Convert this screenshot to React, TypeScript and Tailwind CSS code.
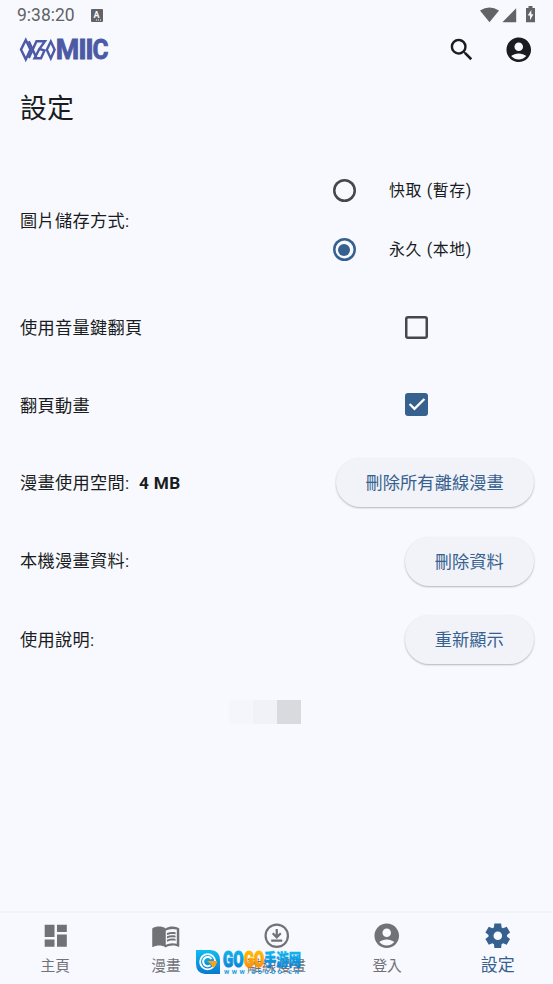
import type { ReactNode } from "react";
import { MdDashboard, MdMenuBook, MdSearch } from "react-icons/md";

function AccountIcon() {
  return (
    <svg viewBox="0 0 24 24" fill="currentColor" className="size-[29.5px]">
      <path d="M12 2C6.48 2 2 6.48 2 12s4.48 10 10 10 10-4.48 10-10S17.52 2 12 2zm0 4c1.93 0 3.5 1.57 3.5 3.5S13.93 13 12 13s-3.5-1.57-3.5-3.5S10.07 6 12 6zm0 14c-2.03 0-4.43-.82-6.14-2.88C7.55 15.8 9.68 15 12 15s4.45.8 6.14 2.12C16.43 19.18 14.03 20 12 20z" />
    </svg>
  );
}

function GearIcon() {
  return (
    <svg viewBox="0 0 24 24" fill="currentColor" className="size-[29.5px]">
      <path d="m9.25 22-.4-3.2q-.325-.125-.612-.3-.288-.175-.563-.375L4.7 19.375l-2.75-4.75 2.575-1.95Q4.5 12.5 4.5 12.337v-.675q0-.162.025-.337L1.95 9.375l2.75-4.75 2.975 1.25q.275-.2.575-.375.3-.175.6-.3l.4-3.2h5.5l.4 3.2q.325.125.613.3.287.175.562.375l2.975-1.25 2.75 4.75-2.575 1.95q.025.175.025.337v.675q0 .163-.05.338l2.575 1.95-2.75 4.75-2.95-1.25q-.275.2-.575.375-.3.175-.6.3l-.4 3.2Zm2.8-6.5q1.45 0 2.475-1.025Q15.55 13.45 15.55 12q0-1.45-1.025-2.475Q13.5 8.5 12.05 8.5q-1.475 0-2.488 1.025Q8.55 10.55 8.55 12q0 1.45 1.012 2.475Q10.575 15.5 12.05 15.5Z" />
    </svg>
  );
}

function OfflineIcon() {
  return (
    <svg viewBox="0 0 24 24" fill="none" stroke="currentColor" strokeWidth="1.8" className="size-[29.5px]">
      <circle cx="12" cy="12" r="9.1" />
      <path d="M12 6.5v6.2M8.7 10l3.3 3.3 3.3-3.3M7.5 16h9" />
    </svg>
  );
}

function StatusBar() {
  return (
    <div className="flex h-[30px] items-center justify-between pl-[17px] pr-[18px] text-[#626364]">
      <div className="flex items-center gap-4">
        <span className="w-[58px] whitespace-nowrap text-[17.5px] leading-[30px]">9:38:20</span>
        <svg width="12" height="13" viewBox="0 0 12 13">
          <rect width="12" height="13" rx="1" fill="currentColor" />
          <text x="2.6" y="9.3" fontSize="9" fontWeight="700" fill="#f8f9ff">A</text>
          <path d="M5 11h1M7 11h1M9 11h1" stroke="#f8f9ff" strokeWidth="1" />
        </svg>
      </div>
      <svg width="55" height="18" viewBox="0 0 55 18" fill="currentColor">
        <path d="M0 4.6Q9.5-1.8 19 4.6L9.5 16.2z" />
        <path d="M36.2 2.3v13.9H22.4z" />
        <path d="M48.5 0h4v2H55v14.2h-9V2h2.5z" />
        <path d="M51.3 4l-3.6 5.4H50v4.9l3.4-6h-2.1z" fill="#f8f9ff" />
      </svg>
    </div>
  );
}

const LOGO_LETTERS = [
  { char: "M", x: 36.8, width: 23.5 },
  { char: "I", x: 59.3, width: 8.5 },
  { char: "I", x: 66.3, width: 8.5 },
  { char: "C", x: 73.5, width: 16 },
];

function Logo() {
  return (
    <svg width="90" height="26" viewBox="0 0 90 26" fill="none" stroke="#4c59a5" className="overflow-visible">
      <g strokeWidth="2.4">
        <path d="M6.8 3L11.4 12.6 6.8 22.4 2 12.6z" />
        <path d="M9.8 4.2L17.5 21M9.8 21L17.5 4.2H26L20.5 11.8 25.5 13.5 22 21.3H15.5L20.5 11.8" />
        <path d="M31.8 4.5l3.8 8.3-3.8 8.6-4-8.6z" />
      </g>
      {LOGO_LETTERS.map((letter) => (
        <text
          key={letter.x}
          x={letter.x}
          y="22.4"
          fontSize="27.5"
          fontWeight="700"
          fill="#4c59a5"
          strokeWidth="0.8"
          textLength={letter.width}
          lengthAdjust="spacingAndGlyphs"
        >
          {letter.char}
        </text>
      ))}
    </svg>
  );
}

function RadioOption({ label, checked = false }: { label: string; checked?: boolean }) {
  return (
    <label className="flex h-[59px] items-center gap-[33px]">
      <span
        className={`flex size-[23px] items-center justify-center rounded-full ${
          checked ? "shadow-[inset_0_0_0_2.5px_#36618e]" : "shadow-[inset_0_0_0_2.5px_#43474e]"
        }`}
      >
        {checked && <span className="size-[12px] rounded-full bg-[#36618e]" />}
      </span>
      <span className="pt-px text-[15.9px] tracking-[0.65px]">{label}</span>
    </label>
  );
}

function Checkbox({ checked = false }: { checked?: boolean }) {
  return (
    <span
      className={`mr-[105px] flex size-[23px] items-center justify-center rounded-[3px] ${
        checked ? "bg-[#36618e]" : "shadow-[inset_0_0_0_2.5px_#43474e]"
      }`}
    >
      {checked && (
        <svg width="18" height="14" viewBox="0 0 18 14" fill="none" className="shrink-0">
          <path d="M1.6 7l4.9 4.8L16.4 2" stroke="white" strokeWidth="2.4" />
        </svg>
      )}
    </span>
  );
}

function ActionButton({ children }: { children: ReactNode }) {
  return (
    <button className="-mr-[0.6px] h-[49px] rounded-full bg-[#f1f3f9] px-[29.8px] pt-[3px] text-[17.2px] tracking-[0.1px] text-[#36618e] shadow-[0_1px_2px_rgba(0,0,0,0.28)]">
      {children}
    </button>
  );
}

function Row({ label, compact = false, children }: { label: ReactNode; compact?: boolean; children: ReactNode }) {
  return (
    <div className={`flex items-center justify-between px-5 ${compact ? "h-[77.4px]" : "h-[78.6px]"}`}>
      <span className={`text-[17.2px] tracking-[0.3px] ${compact ? "pt-1" : "pt-[2px]"}`}>{label}</span>
      {children}
    </div>
  );
}

const NAV_ITEMS = [
  { label: "主頁", icon: <MdDashboard size={29.5} /> },
  { label: "漫畫", icon: <MdMenuBook size={29.5} /> },
  { label: "離線漫畫", icon: <OfflineIcon /> },
  { label: "登入", icon: <AccountIcon /> },
  { label: "設定", icon: <GearIcon />, active: true },
];

function BottomNav() {
  return (
    <nav className="relative flex h-[73px] border-t-2 border-[#f1f2f7] text-[#717276]">
      {NAV_ITEMS.map((item) => (
        <div
          key={item.label}
          className={`flex flex-1 flex-col items-center pt-[8px] ${item.active ? "text-[#36618e]" : ""}`}
        >
          <span className="flex h-[30px] items-center">{item.icon}</span>
          <span
            className={
              item.active ? "text-[17px] leading-[28px]" : "text-[14.7px] leading-[30px]"
            }
          >
            {item.label}
          </span>
        </div>
      ))}
      <Watermark />
    </nav>
  );
}

function Watermark() {
  return (
    <svg
      width="108"
      height="28"
      viewBox="0 0 108 28"
      className="absolute left-[195px] top-[36px] overflow-visible"
    >
      <defs>
        <linearGradient id="blue" x1="0" y1="0" x2="0" y2="1">
          <stop offset="0" stopColor="#12bdf2" />
          <stop offset="1" stopColor="#0878d0" />
        </linearGradient>
        <linearGradient id="orange" x1="0" y1="0" x2="0" y2="1">
          <stop offset="0" stopColor="#ffc400" />
          <stop offset="1" stopColor="#ff8500" />
        </linearGradient>
      </defs>
      <path d="M1 1h15q9 1 9 10v14H10Q1 24 1 15z" fill="url(#blue)" />
      <circle cx="12.7" cy="12.8" r="7.6" fill="none" stroke="white" strokeWidth="1.8" />
      <path d="M16.5 10a4.6 4.6 0 1 0-1 6.3" fill="none" stroke="white" strokeWidth="2" />
      <path d="M12 12h10q0 4-4 7l-2-4z" fill="#ff9f16" />
      <g fontWeight="900" strokeWidth="1.1">
        <text x="28" y="18" fontSize="22" fill="url(#blue)" stroke="url(#blue)" textLength="20.5" lengthAdjust="spacingAndGlyphs">GO</text>
        <text x="49" y="18" fontSize="22" fill="url(#orange)" stroke="url(#orange)" textLength="20" lengthAdjust="spacingAndGlyphs">GO</text>
        <text x="69" y="17" fontSize="17" fill="url(#blue)" stroke="url(#blue)" strokeWidth="0.4" textLength="37" lengthAdjust="spacingAndGlyphs">手游网</text>
      </g>
      <text x="29" y="25" fontSize="6" fontWeight="700" fill="#169bdc" textLength="75">WWW.GOGOO.CN</text>
    </svg>
  );
}

export default function App() {
  return (
    <div className="flex h-[984px] w-[553px] flex-col overflow-hidden bg-[#f8f9ff] font-[Roboto,'Noto_Sans_CJK_TC',sans-serif] text-[#191c20]">
      <StatusBar />
      <header className="flex h-10 items-center justify-between pl-[19px] pr-5">
        <Logo />
        <div className="flex items-center gap-[27px]">
          <MdSearch size={29.5} />
          <AccountIcon />
        </div>
      </header>
      <h1 className="mt-[19px] pl-5 text-[27px] leading-10">設定</h1>

      <main className="flex flex-1 flex-col pt-8">
        <div className="mb-[9.4px] flex h-[118px] items-center justify-between pl-5 pr-[81px]">
          <span className="pt-[3px] text-[17.2px] tracking-[0.3px]">圖片儲存方式:</span>
          <div>
            <RadioOption label="快取 (暫存)" />
            <RadioOption label="永久 (本地)" checked />
          </div>
        </div>
        <Row label="使用音量鍵翻頁" compact>
          <Checkbox />
        </Row>
        <Row label="翻頁動畫" compact>
          <Checkbox checked />
        </Row>
        <Row
          label={
            <>
              漫畫使用空間:<b className="ml-[9.7px]">4 MB</b>
            </>
          }
        >
          <ActionButton>刪除所有離線漫畫</ActionButton>
        </Row>
        <Row label="本機漫畫資料:">
          <ActionButton>刪除資料</ActionButton>
        </Row>
        <Row label="使用說明:">
          <ActionButton>重新顯示</ActionButton>
        </Row>
        <div className="ml-[229px] mt-[21px] flex h-6">
          <div className="w-6 bg-[#f5f6fb]" />
          <div className="w-6 bg-[#f1f2f7]" />
          <div className="w-6 bg-[#d9dade]" />
        </div>
      </main>

      <BottomNav />
    </div>
  );
}
